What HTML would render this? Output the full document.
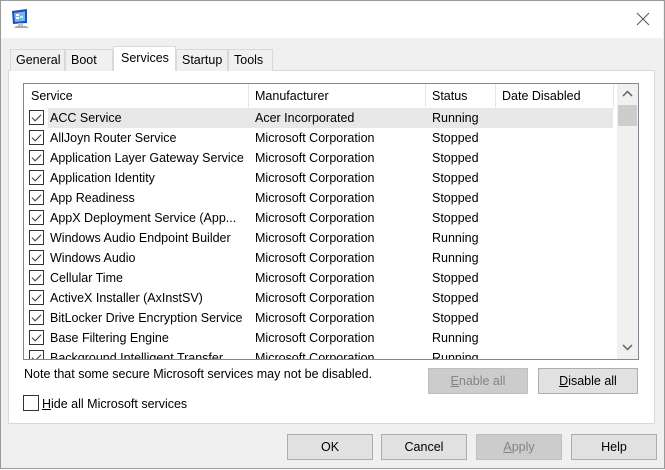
<!DOCTYPE html>
<html><head><meta charset="utf-8"><style>
*{box-sizing:border-box;margin:0;padding:0}
body{width:665px;height:470px;overflow:hidden;background:#fff;font-family:"Liberation Sans",sans-serif;font-size:12px;color:#000;position:relative}
.a{position:absolute}
.win{left:0;top:0;width:665px;height:469px;border:1px solid #9a9a9a;background:#f0f0f0}
.title{left:1px;top:1px;width:662px;height:37px;background:#fff}
.tab{position:absolute;top:49px;height:22px;background:#f0f0f0;border:1px solid #d9d9d9;border-bottom:none;padding:3px 0 0 5px;font-size:12.5px}
.panel{left:8px;top:70px;width:647px;height:354px;background:#fff;border:1px solid #d9d9d9}
.list{left:23px;top:83px;width:616px;height:277px;border:1px solid #828790;background:#fff;overflow:hidden}
.row{position:absolute;left:0;height:20px;width:593px;font-size:12.5px}
.row span{position:absolute;top:3px;white-space:nowrap}
.cb{position:absolute;left:5px;top:2px;width:15px;height:15px;border:1px solid #333;background:#fff}
.cb:after{content:"";position:absolute;left:4px;top:1px;width:4px;height:8px;border:solid #333;border-width:0 1.3px 1.3px 0;transform:rotate(45deg)}
.btn{position:absolute;height:26px;border:1px solid #adadad;background:#e1e1e1;text-align:center;line-height:24px;font-size:12.5px}
.dis{background:#cccccc;border-color:#bfbfbf;color:#838383}
</style></head><body>
<div class="a win"></div>
<div class="a title"></div>
<svg class="a" style="left:10px;top:8px" width="21" height="21" viewBox="0 0 21 21"><path d="M2 3L17 1V15L3 16Z" fill="#1d4fb8"/><path d="M4 5L15 3.5V13L5 14Z" fill="#7fb2ee"/><rect x="6" y="6" width="3" height="2" fill="#fff"/><rect x="10" y="8" width="3" height="2" fill="#9fe"/><rect x="6" y="9" width="3" height="2" fill="#fff"/><path d="M6 18h10l3 2H4z" fill="#aaa"/><rect x="8" y="15" width="5" height="3" fill="#c4c4c4"/></svg>
<svg class="a" style="left:636px;top:12px" width="14" height="14"><path d="M1 1L13 13M13 1L1 13" stroke="#555" stroke-width="1"/></svg>
<div class="a panel"></div>
<div class="tab" style="left:10px;width:55px">General</div>
<div class="tab" style="left:65px;width:48px">Boot</div>
<div class="tab" style="left:176px;width:52px">Startup</div>
<div class="tab" style="left:228px;width:45px">Tools</div>
<div class="tab" style="left:113px;top:46px;height:25px;width:63px;background:#fff;padding:4px 0 0 7px">Services</div>
<div class="a list">
<div class="row" style="top:0;height:24px;font-size:12.5px"><span style="left:7px;top:5px">Service</span><span style="left:231px;top:5px">Manufacturer</span><span style="left:408px;top:5px">Status</span><span style="left:478px;top:5px">Date Disabled</span></div>
<div class="a" style="left:224px;top:0;width:1px;height:23px;background:#e5e5e5"></div>
<div class="a" style="left:401px;top:0;width:1px;height:23px;background:#e5e5e5"></div>
<div class="a" style="left:471px;top:0;width:1px;height:23px;background:#e5e5e5"></div>
<div class="a" style="left:589px;top:0;width:1px;height:23px;background:#e5e5e5"></div>
<div class="a" style="left:24px;top:24px;width:565px;height:20px;background:#e8e8e8"></div>
<div id="rows"></div>
<div class="a" style="left:593px;top:0;width:21px;height:275px;background:#f0f0f0"></div>
<div class="a" style="left:594px;top:21px;width:19px;height:21px;background:#cdcdcd"></div>
<svg class="a" style="left:598px;top:6px" width="11" height="8"><path d="M1 6L5.5 1.5L10 6" fill="none" stroke="#606060" stroke-width="1.5"/></svg>
<svg class="a" style="left:598px;top:259px" width="11" height="8"><path d="M1 2L5.5 6.5L10 2" fill="none" stroke="#606060" stroke-width="1.5"/></svg>
</div>
<div class="a" style="left:24px;top:367px;font-size:12.5px">Note that some secure Microsoft services may not be disabled.</div>
<div class="btn dis" style="left:428px;top:368px;width:100px"><u>E</u>nable all</div>
<div class="btn" style="left:538px;top:368px;width:100px"><u>D</u>isable all</div>
<div class="a" style="left:23px;top:395px;width:16px;height:16px;border:1px solid #333;background:#fff"></div>
<div class="a" style="left:42px;top:397px;font-size:12.5px"><u>H</u>ide all Microsoft services</div>
<div class="btn" style="left:287px;top:434px;width:86px">OK</div>
<div class="btn" style="left:381px;top:434px;width:86px">Cancel</div>
<div class="btn dis" style="left:476px;top:434px;width:86px"><u>A</u>pply</div>
<div class="btn" style="left:571px;top:434px;width:86px">Help</div>
<script>
var d=[["ACC Service","Acer Incorporated","Running"],["AllJoyn Router Service","Microsoft Corporation","Stopped"],["Application Layer Gateway Service","Microsoft Corporation","Stopped"],["Application Identity","Microsoft Corporation","Stopped"],["App Readiness","Microsoft Corporation","Stopped"],["AppX Deployment Service (App...","Microsoft Corporation","Stopped"],["Windows Audio Endpoint Builder","Microsoft Corporation","Running"],["Windows Audio","Microsoft Corporation","Running"],["Cellular Time","Microsoft Corporation","Stopped"],["ActiveX Installer (AxInstSV)","Microsoft Corporation","Stopped"],["BitLocker Drive Encryption Service","Microsoft Corporation","Stopped"],["Base Filtering Engine","Microsoft Corporation","Running"],["Background Intelligent Transfer ...","Microsoft Corporation","Running"]];
var h="";d.forEach(function(r,i){h+='<div class="row" style="top:'+(24+i*20)+'px"><div class="cb"></div><span style="left:26px">'+r[0]+'</span><span style="left:231px">'+r[1]+'</span><span style="left:408px">'+r[2]+'</span></div>';});
document.getElementById("rows").innerHTML=h;
</script>
</body></html>
